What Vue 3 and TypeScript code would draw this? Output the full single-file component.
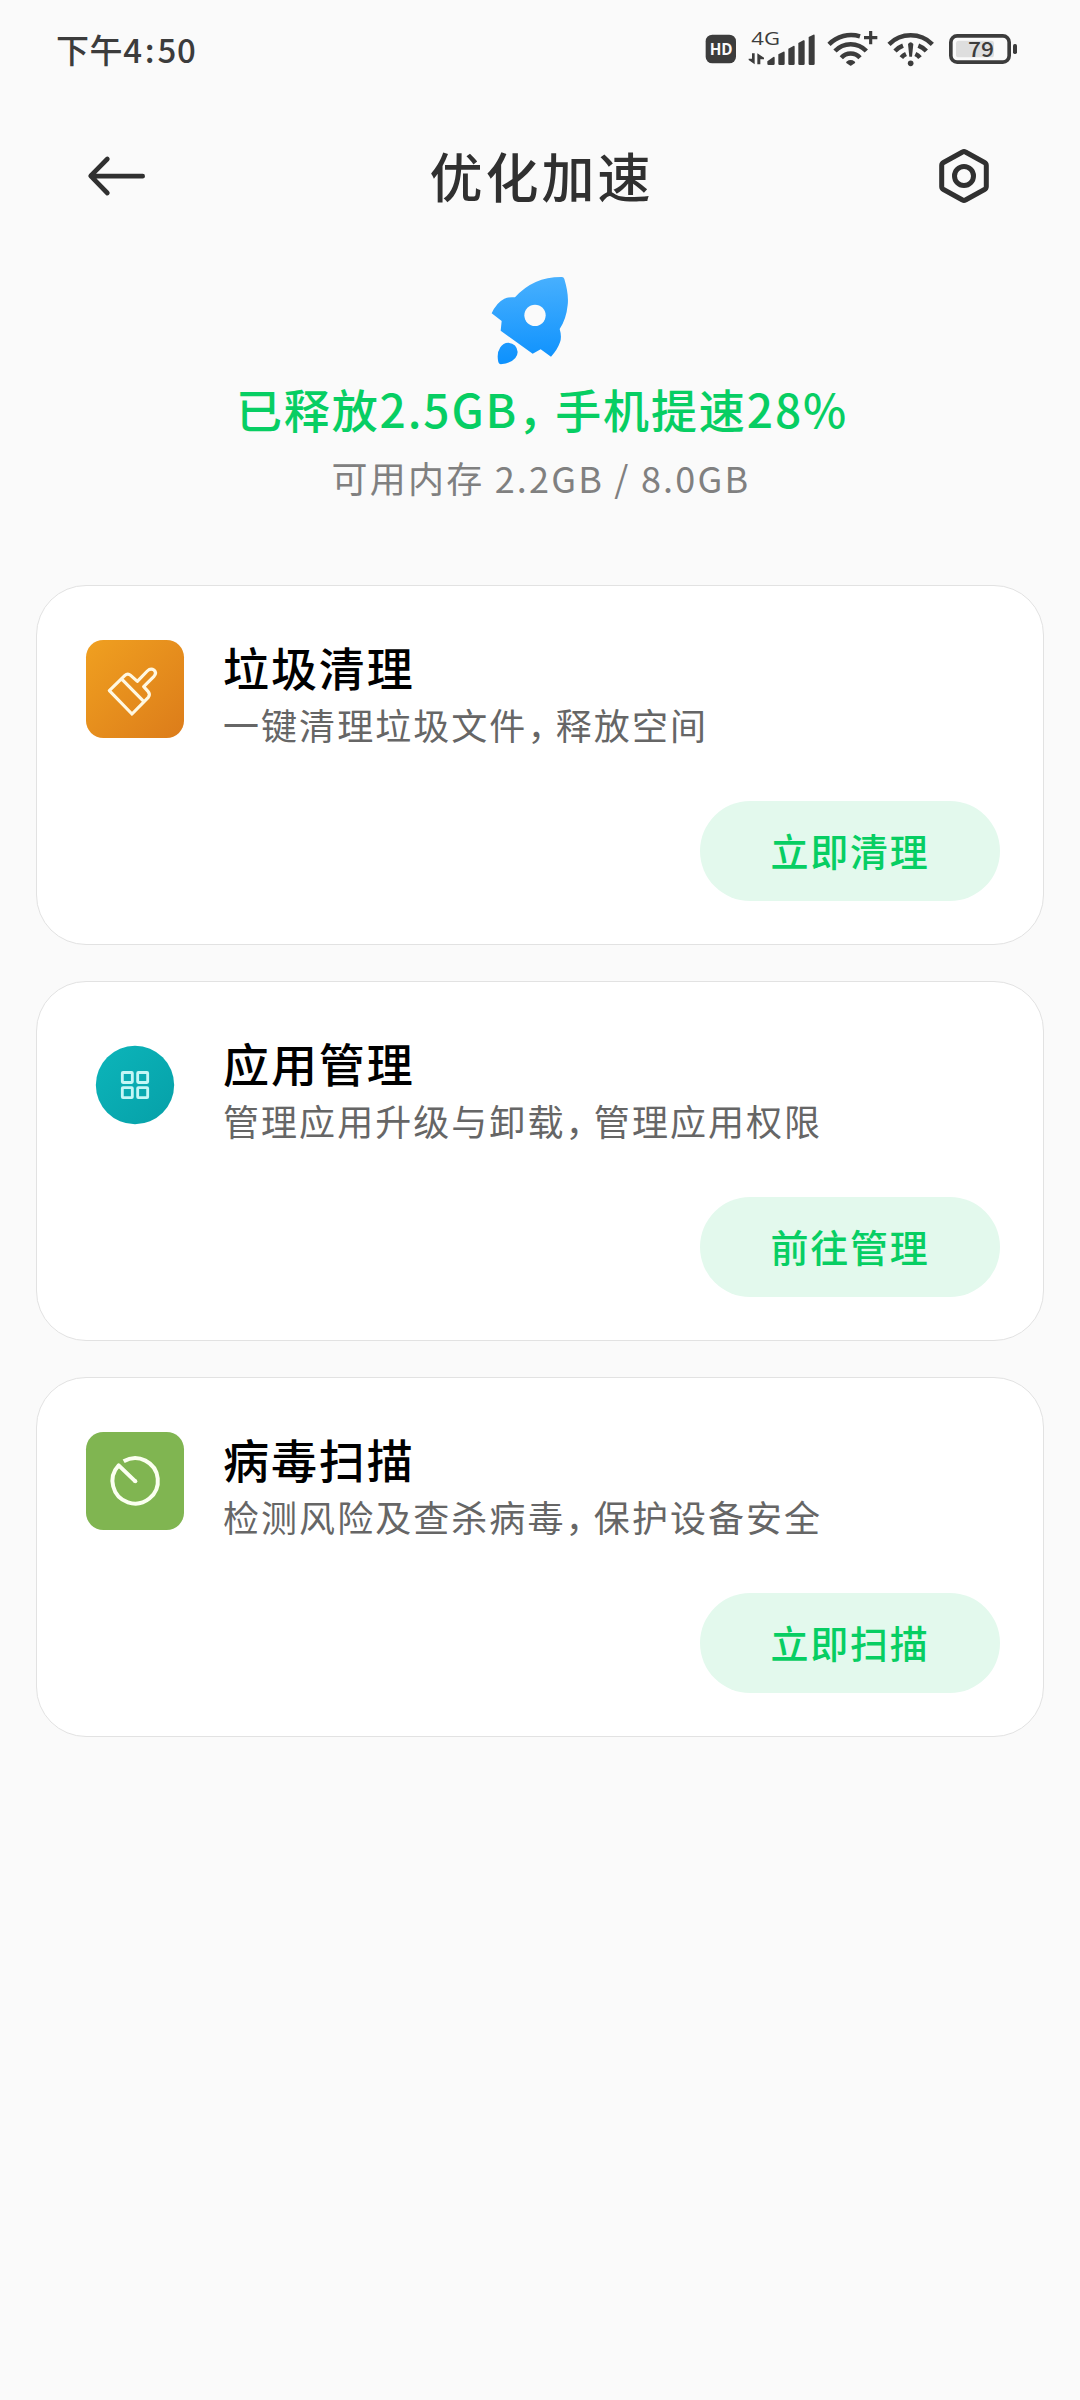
<script setup lang="ts">
interface Feature {
  id: 'clean' | 'apps' | 'virus'
  title: string
  desc: [string, string]
  action: string
}

const features: Feature[] = [
  { id: 'clean', title: '垃圾清理', desc: ['一键清理垃圾文件', '释放空间'], action: '立即清理' },
  { id: 'apps', title: '应用管理', desc: ['管理应用升级与卸载', '管理应用权限'], action: '前往管理' },
  { id: 'virus', title: '病毒扫描', desc: ['检测风险及查杀病毒', '保护设备安全'], action: '立即扫描' },
]
</script>

<template>
  <main class="screen">
    <div class="status">
      <span class="time">下午4<span class="colon">:</span>50</span>
      <div class="indicators">
        <svg class="hd" width="32" height="40" viewBox="75 54 96 120">
          <rect x="77" y="74" width="91" height="86" rx="20" fill="#3c3c3c" />
          <text x="89" y="134" font-size="47" font-weight="700" fill="#fafafa" textLength="69" lengthAdjust="spacingAndGlyphs" class="latin">HD</text>
        </svg>
        <svg class="signal" width="68" height="40" viewBox="204 54 204 120" fill="#3c3c3c">
          <text x="214" y="104" font-size="56" textLength="86" lengthAdjust="spacingAndGlyphs" class="latin">4G</text>
          <path d="M216 130h8v33l-18-13v-4h10zM232 163v-33l20 13v5h-11v15z" />
          <path d="M262 161V154L280 141Q284 139 284 144V161Q284 165 280 165H266Q262 165 262 161ZM295 161V133L310 125Q314 123 314 128V161Q314 165 310 165H299Q295 165 295 161ZM325 161V116L340 108Q344 106 344 111V161Q344 165 340 165H329Q325 165 325 161ZM355 161V99L370 91Q374 89 374 94V161Q374 165 370 165H359Q355 165 355 161ZM386 161V81L400 74Q404 72 404 77V161Q404 165 400 165H390Q386 165 386 161Z" />
        </svg>
        <svg class="wifi" width="52" height="40" viewBox="441 54 156 120" fill="none" stroke="#3c3c3c" stroke-width="13.500">
          <path d="M447 103A92 92 0 0 1 540 79M465 123A64 64 0 0 1 559 123M484 143A38 38 0 0 1 540 143" />
          <path d="M502 157Q512 150 522 157L512 164Z" fill="#3c3c3c" stroke-width="7" stroke-linejoin="round" />
          <path d="M572 63V103M552 83H592" stroke-width="9.500" />
        </svg>
        <svg class="wifi-alert" width="48" height="40" viewBox="621 54 144 120" fill="none" stroke="#3c3c3c" stroke-width="13.500">
          <path d="M627 103A92 92 0 0 1 757 103M645 123A64 64 0 0 1 669 107M715 107A64 64 0 0 1 739 123M664 143A38 38 0 0 1 678 132M706 132A38 38 0 0 1 720 143" />
          <path d="M684 102Q692 92 700 102L696 140H688Z" fill="#3c3c3c" stroke="none" />
          <circle cx="692" cy="160" r="8.500" fill="#3c3c3c" stroke="none" />
        </svg>
        <svg class="battery" width="70" height="40" viewBox="804 54 210 120">
          <rect x="812.500" y="77.500" width="175" height="79" rx="19" fill="none" stroke="#3c3c3c" stroke-width="11" />
          <rect x="828" y="92" width="114" height="50" rx="8" fill="#dedede" />
          <rect x="999" y="102" width="12" height="30" rx="5" fill="#3c3c3c" />
          <text x="864" y="142" font-size="63" font-weight="500" fill="#3c3c3c" textLength="78" lengthAdjust="spacingAndGlyphs" class="cjk">79</text>
        </svg>
      </div>
    </div>

    <header class="bar">
      <svg width="60" height="42" viewBox="141 436 180 126" fill="none" stroke="#303030" stroke-width="14" stroke-linecap="round" stroke-linejoin="round">
        <path d="M308 499.500H154M202 448L152 498.500L202 550" />
      </svg>
      <h1>优化加速</h1>
      <svg width="50" height="54" viewBox="0 0 50 54" fill="none" stroke="#303030" stroke-width="5">
        <path d="M23.500 3Q25 2 26.500 3L45.500 13.500Q47.300 14.500 47.300 16.500V37.500Q47.300 39.500 45.500 40.500L26.500 51Q25 52 23.500 51L4.500 40.500Q2.700 39.500 2.700 37.500V16.500Q2.700 14.500 4.500 13.500Z" />
        <circle cx="25" cy="27" r="9.500" />
      </svg>
    </header>

    <section class="hero">
      <svg width="80" height="90" viewBox="60 45 240 270" fill="url(#rocket)">
        <defs>
          <linearGradient id="rocket" gradientUnits="userSpaceOnUse" x1="190" y1="50" x2="200" y2="300">
            <stop offset="0" stop-color="#48b0fe" />
            <stop offset="1" stop-color="#0f92fd" />
          </linearGradient>
        </defs>
        <path d="M276 51Q281 51 283 57Q297 104 293 135Q289 177 269 207Q276 230 270 247Q262 270 243 290L212 268L188 281L92 212L95 183L65 160Q79 128 103 116Q116 110 135 112Q190 50 276 51Z" />
        <path d="M85 306Q79 280 91 262Q99 248 115 248Q141 251 143 276Q142 306 92 313Q86 312 85 306Z" />
        <circle cx="195" cy="166" r="32" fill="#fafafa" />
      </svg>
      <h2>已释放2.5GB<span class="comma">，</span>手机提速28%</h2>
      <p>可用内存 2.2GB / 8.0GB</p>
    </section>

    <section class="cards">
      <article v-for="item in features" :key="item.id" class="card">
        <div class="info">
          <svg v-if="item.id === 'clean'" class="icon" width="98" height="98" viewBox="198 210 294 294">
            <defs>
              <linearGradient id="orange" x1="0" y1="0" x2="1" y2="1">
                <stop offset="0" stop-color="#f0a020" />
                <stop offset="1" stop-color="#dc7c1a" />
              </linearGradient>
            </defs>
            <rect x="198" y="210" width="294" height="294" rx="52" fill="url(#orange)" />
            <path d="M268 362L314 317Q323 308 332 316L352 334L382 303Q392 293 402 300Q411 308 402 319L371 350L384 364Q392 373 385 382L336 432ZM306 328L371 394" fill="none" stroke="#fff8e2" stroke-width="9.500" stroke-linejoin="round" />
          </svg>
          <svg v-else-if="item.id === 'apps'" class="icon" width="98" height="98" viewBox="198 228 294 294">
            <defs>
              <linearGradient id="teal" x1="0" y1="0" x2="1" y2="1">
                <stop offset="0" stop-color="#0cb5ba" />
                <stop offset="1" stop-color="#06a0a8" />
              </linearGradient>
            </defs>
            <circle cx="345" cy="375" r="117.500" fill="url(#teal)" />
            <g fill="none" stroke="#c4f6f6" stroke-width="8.500">
              <rect x="307" y="337.500" width="30" height="30" rx="2" />
              <rect x="353" y="337.500" width="30" height="30" rx="2" />
              <rect x="307" y="383" width="30" height="30" rx="2" />
              <rect x="353" y="383" width="30" height="30" rx="2" />
            </g>
          </svg>
          <svg v-else class="icon" width="98" height="98" viewBox="198 186 294 294">
            <rect x="198" y="186" width="294" height="294" rx="52" fill="#80b551" />
            <path d="M311 274A68 68 0 1 1 296 286L346 334" fill="none" stroke="#fbfff0" stroke-width="12" stroke-linejoin="round" />
            <circle cx="346" cy="334" r="6" fill="#fbfff0" />
          </svg>
          <div class="text">
            <h3>{{ item.title }}</h3>
            <p>{{ item.desc[0] }}<span class="comma">，</span>{{ item.desc[1] }}</p>
          </div>
        </div>
        <button type="button">{{ item.action }}</button>
      </article>
    </section>
  </main>
</template>

<style>
body {
  background: #fafafa;
}
</style>

<style scoped>
.screen {
  box-sizing: border-box;
  width: 1080px;
  height: 2400px;
  overflow: hidden;
  background: #fafafa;
  font-family: "Noto Sans CJK SC", sans-serif;
}
h1, h2, h3, p {
  margin: 0;
}
svg {
  display: block;
  flex: none;
  overflow: visible;
}
.cjk {
  font-family: "Noto Sans CJK SC", sans-serif;
}
.latin {
  font-family: "Open Sans", sans-serif;
}
.status {
  display: flex;
  justify-content: space-between;
  align-items: center;
  height: 96px;
  padding: 0 62px 0 56px;
}
.time {
  font-size: 33px;
  font-weight: 500;
  letter-spacing: 0.6px;
  padding-top: 1px;
  color: #3c3c3c;
}
.colon {
  letter-spacing: 3px;
  margin-left: 2px;
}
.indicators {
  display: flex;
}
.signal, .wifi {
  margin-left: 11px;
}
.wifi-alert {
  margin-left: 8px;
}
.battery {
  margin-left: 13px;
}
.bar {
  display: flex;
  justify-content: space-between;
  align-items: center;
  height: 160px;
  padding: 0 91px 0 87px;
}
.bar h1 {
  font-size: 53px;
  line-height: 80px;
  font-weight: 500;
  letter-spacing: 3px;
  color: #303030;
  padding-bottom: 2px;
  padding-right: 3px;
}
.hero {
  display: flex;
  flex-direction: column;
  align-items: center;
  height: 310px;
  padding-top: 19px;
}
.hero svg {
  margin-right: 20px;
}
.hero h2 {
  margin-top: 13px;
  padding-left: 4px;
  font-size: 46px;
  line-height: 60px;
  font-weight: 500;
  letter-spacing: 1.9px;
  color: #07ce63;
  white-space: nowrap;
}
.hero p {
  margin-top: 14px;
  padding-left: 2px;
  font-size: 36px;
  line-height: 50px;
  letter-spacing: 2.2px;
  color: #808080;
  white-space: nowrap;
}
.hero .comma {
  letter-spacing: -9px;
}
.cards {
  display: flex;
  flex-direction: column;
  gap: 36px;
  padding: 0 36px;
}
.card {
  box-sizing: border-box;
  display: flex;
  flex-direction: column;
  justify-content: space-between;
  height: 360px;
  padding: 50px 43px 43px 49px;
  border: 1px solid #e2e2e2;
  border-radius: 50px;
  background: #fff;
}
.info {
  display: flex;
  gap: 39px;
}
.icon {
  margin-top: 4px;
}
.text {
  padding-top: 1px;
}
.text h3 {
  font-size: 46px;
  line-height: 58px;
  font-weight: 500;
  letter-spacing: 1.9px;
  color: #000;
}
.text p {
  margin-top: 4px;
  font-size: 36px;
  line-height: 50px;
  letter-spacing: 2.05px;
  color: #666;
  white-space: nowrap;
}
.text .comma {
  letter-spacing: -7.6px;
}
button {
  align-self: flex-end;
  width: 300px;
  height: 100px;
  padding: 0 0 3px;
  border: 0;
  border-radius: 50px;
  background: #e3f9ed;
  color: #07ce63;
  font-family: inherit;
  font-size: 38px;
  font-weight: 500;
  letter-spacing: 1.7px;
}
</style>
